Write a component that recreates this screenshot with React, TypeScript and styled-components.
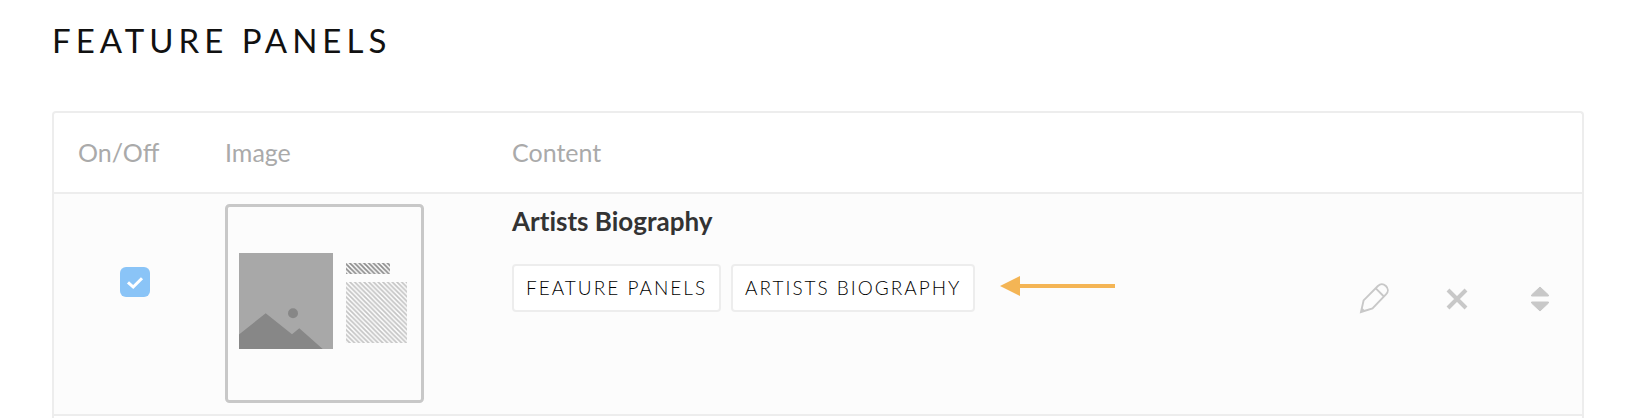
import React from "react";
import styled, { createGlobalStyle } from "styled-components";

const GlobalStyle = createGlobalStyle`
  * { box-sizing: border-box; }
  body {
    margin: 0;
    background: #fff;
    color: #111;
    font-family: Lato, "Liberation Sans", sans-serif;
  }
`;

const Page = styled.main`
  padding: 20px 46px 0 52px;
`;

const Heading = styled.h1`
  margin: 0 0 51px;
  font-size: 33px;
  line-height: 40px;
  font-weight: 400;
  letter-spacing: 5px;
`;

const Frame = styled.div`
  border: 2px solid #ededed;
  border-bottom: 0;
  border-radius: 4px 4px 0 0;
  padding-bottom: 2px;
`;

const PanelTable = styled.table`
  width: 100%;
  border-collapse: separate;
  border-spacing: 0;
  table-layout: fixed;
`;

const HeadCell = styled.th<{ $width?: number; $indent?: number }>`
  width: ${(p) => (p.$width ? `${p.$width}px` : "auto")};
  height: 81px;
  padding: 0 0 2px ${(p) => p.$indent ?? 0}px;
  border-bottom: 2px solid #ededed;
  color: #aaa;
  font-size: 25px;
  line-height: 32px;
  font-weight: 400;
  text-align: left;
`;

const Cell = styled.td<{ $top: number; $indent?: number }>`
  padding: ${(p) => p.$top}px 0 10px ${(p) => p.$indent ?? 0}px;
  border-bottom: 2px solid #ededed;
  background: #fcfcfc;
  vertical-align: top;
`;

const Toggle = styled.input`
  display: block;
  appearance: none;
  width: 30px;
  height: 30px;
  margin: 0;
  border-radius: 6px;
  background: #8ac4f7;
`;

const ToggleBox = styled.label`
  display: inline-grid;
  > * { grid-area: 1 / 1; }
  > svg { pointer-events: none; visibility: hidden; }
  > input:checked + svg { visibility: visible; }
`;

const Thumbnail = styled.svg`
  display: block;
  width: 200px;
  height: 200px;
`;

const PanelTitle = styled.h2`
  margin: 0 0 27px;
  color: #333;
  font-size: 26px;
  line-height: 32px;
  font-weight: 700;
  font-variant-ligatures: none;
`;

const TagRow = styled.div`
  display: flex;
  align-items: center;
`;

const Tag = styled.span`
  margin-right: 10px;
  padding: 0 12px;
  border: 2px solid #ededed;
  border-radius: 4px;
  background: #fff;
  color: #000;
  font-size: 19px;
  line-height: 44px;
  font-weight: 300;
  letter-spacing: 2px;
  white-space: nowrap;
`;

const Pointer = styled.svg`
  flex: none;
  margin: 0 0 4px 15px;
`;

const Actions = styled.div`
  display: flex;
  justify-content: flex-end;
  gap: 51px;
  padding-right: 26px;
`;

const IconButton = styled.button`
  display: block;
  width: 32px;
  height: 32px;
  padding: 0;
  border: 0;
  background: none;
  color: #c8c8c8;
  cursor: pointer;
`;

function LayoutPreview() {
  return (
    <Thumbnail viewBox="0 0 200 200" role="img" aria-label="Image left, text right">
      <defs>
        <pattern id="dark" width="4.7" height="4.7" patternUnits="userSpaceOnUse">
          <path d="M-1 -1L5.7 5.7M-1 3.7L1 5.7M3.7 -1L5.7 1" stroke="#8c8c8c" strokeWidth="1.8" />
        </pattern>
        <pattern id="light" width="4.7" height="4.7" patternUnits="userSpaceOnUse">
          <path d="M-1 -1L5.7 5.7M-1 3.7L1 5.7M3.7 -1L5.7 1" stroke="#c4c4c4" strokeWidth="1.7" />
        </pattern>
      </defs>
      <rect x="1.5" y="1.5" width="196" height="196" rx="3" fill="#fcfcfc" stroke="#c8c8c8" strokeWidth="3" />
      <path d="M14 49h94v96H14z" fill="#a8a8a8" />
      <path d="M14 130.5L40.7 109.3L67 130.3L74.3 124.3L97.7 145H14z" fill="#878787" />
      <circle cx="68" cy="109.3" r="5" fill="#878787" />
      <rect x="121" y="59" width="44" height="11" fill="url(#dark)" />
      <rect x="121" y="78" width="61" height="61" fill="url(#light)" />
    </Thumbnail>
  );
}

export default function App() {
  return (
    <>
      <GlobalStyle />
      <Page>
        <Heading>FEATURE PANELS</Heading>
        <Frame>
          <PanelTable>
            <thead>
              <tr>
                <HeadCell $width={171} $indent={24}>On/Off</HeadCell>
                <HeadCell $width={287}>Image</HeadCell>
                <HeadCell>Content</HeadCell>
                <HeadCell $width={260} aria-label="Actions" />
              </tr>
            </thead>
            <tbody>
              <tr>
                <Cell $top={73} $indent={66}>
                  <ToggleBox>
                    <Toggle type="checkbox" defaultChecked aria-label="Artists Biography on" />
                    <svg width="30" height="30" viewBox="0 0 30 30" fill="none" stroke="#fff" strokeWidth="3">
                      <path d="M8 15.3l5.2 4.7L22 11.2" />
                    </svg>
                  </ToggleBox>
                </Cell>
                <Cell $top={10}>
                  <LayoutPreview />
                </Cell>
                <Cell $top={11}>
                  <PanelTitle>Artists Biography</PanelTitle>
                  <TagRow>
                    <Tag>FEATURE PANELS</Tag>
                    <Tag>ARTISTS BIOGRAPHY</Tag>
                    <Pointer width="115" height="20" viewBox="0 0 115 20" fill="#f4b555" aria-hidden="true">
                      <path d="M0 10L20 0V8H115V12H20V20z" />
                    </Pointer>
                  </TagRow>
                </Cell>
                <Cell $top={88}>
                  <Actions>
                    <IconButton type="button" aria-label="Edit">
                      <svg width="32" height="32" viewBox="0 0 32 32" fill="none" stroke="currentColor" strokeWidth="1.9">
                        <path d="M3 30L5.6 18.4L19.9 4C22.3 1.7 25.5 1.8 27.9 4C30.4 6.4 30.4 9.9 28.2 12.2L14.5 26.4zM17.8 6.4L25.9 14.5M4 27L6 29" />
                      </svg>
                    </IconButton>
                    <IconButton type="button" aria-label="Remove">
                      <svg width="32" height="32" viewBox="0 0 32 32" stroke="currentColor" strokeWidth="4">
                        <path d="M7 8L25 26M25 8L7 26" />
                      </svg>
                    </IconButton>
                    <IconButton type="button" aria-label="Reorder">
                      <svg width="32" height="32" viewBox="0 0 32 32" fill="currentColor" stroke="currentColor" strokeWidth="1" strokeLinejoin="round">
                        <path d="M16 5L24.5 13V14H7.5V13zM16 29L7.5 21V20H24.5V21z" />
                      </svg>
                    </IconButton>
                  </Actions>
                </Cell>
              </tr>
            </tbody>
          </PanelTable>
        </Frame>
      </Page>
    </>
  );
}
